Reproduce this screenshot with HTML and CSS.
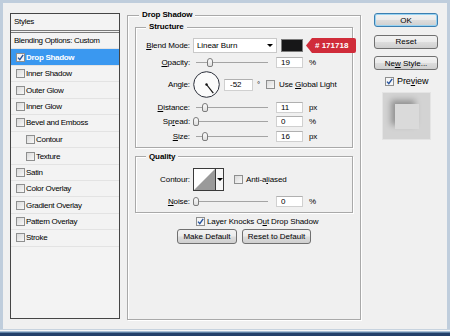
FILE: index.html
```html
<!DOCTYPE html>
<html lang="en">
<head>
    <meta charset="UTF-8">
    <title>Layer Style</title>
    <link rel="stylesheet" href="styles.css">
</head>
<body>
    <div class="window">
        <div class="dialog">
            <div class="styles-panel">
                <div class="styles-head">Styles</div>
                <div class="style-row plain">Blending Options: Custom</div>
                <div class="style-row active"><span class="cb on"><svg viewBox="0 0 7 7"><path d="M1 3.6 L2.8 5.6 L6.2 0.8"/></svg></span>Drop Shadow</div>
                <div class="style-row"><span class="cb"></span>Inner Shadow</div>
                <div class="style-row"><span class="cb"></span>Outer Glow</div>
                <div class="style-row"><span class="cb"></span>Inner Glow</div>
                <div class="style-row"><span class="cb"></span>Bevel and Emboss</div>
                <div class="style-row sub"><span class="cb"></span>Contour</div>
                <div class="style-row sub"><span class="cb"></span>Texture</div>
                <div class="style-row"><span class="cb"></span>Satin</div>
                <div class="style-row"><span class="cb"></span>Color Overlay</div>
                <div class="style-row"><span class="cb"></span>Gradient Overlay</div>
                <div class="style-row"><span class="cb"></span>Pattern Overlay</div>
                <div class="style-row"><span class="cb"></span>Stroke</div>
            </div>

            <fieldset class="group main">
                <legend>Drop Shadow</legend>

                <fieldset class="group sub structure">
                    <legend>Structure</legend>
                    <div class="rows">
                        <div class="row blend">
                            <span class="lbl"><u>B</u>lend Mode:</span>
                            <div class="select">Linear Burn<span class="arrow"></span></div>
                            <span class="swatch"></span>
                            <span class="tag"># 171718</span>
                        </div>
                        <div class="row">
                            <span class="lbl"><u>O</u>pacity:</span>
                            <span class="slider"><span class="thumb" style="left: 19%"></span></span>
                            <input class="num" type="text" value="19">
                            <span class="unit">%</span>
                        </div>
                        <div class="row">
                            <span class="lbl">Angle:</span>
                            <svg class="dial" width="27" height="27" viewBox="0 0 27 27">
                                <circle cx="13.5" cy="13.5" r="12.8" fill="#fbfbfb" stroke="#2b2f3a" stroke-width="1"/>
                                <line x1="13.5" y1="13.5" x2="20.3" y2="22.2" stroke="#111" stroke-width="1.2"/>
                                <circle cx="13.5" cy="13.5" r="1.2" fill="#111"/>
                            </svg>
                            <input class="num angle" type="text" value="-52">
                            <span class="deg">°</span>
                            <span class="cb"></span>
                            <span class="check-text">Use <u>G</u>lobal Light</span>
                        </div>
                        <div class="row">
                            <span class="lbl"><u>D</u>istance:</span>
                            <span class="slider"><span class="thumb" style="left: 12.5%"></span></span>
                            <input class="num" type="text" value="11">
                            <span class="unit">px</span>
                        </div>
                        <div class="row">
                            <span class="lbl">Sp<u>r</u>ead:</span>
                            <span class="slider"><span class="thumb" style="left: 0%"></span></span>
                            <input class="num" type="text" value="0">
                            <span class="unit">%</span>
                        </div>
                        <div class="row">
                            <span class="lbl"><u>S</u>ize:</span>
                            <span class="slider"><span class="thumb" style="left: 12.5%"></span></span>
                            <input class="num" type="text" value="16">
                            <span class="unit">px</span>
                        </div>
                    </div>
                </fieldset>

                <fieldset class="group sub quality">
                    <legend>Quality</legend>
                    <div class="rows">
                        <div class="row">
                            <span class="lbl">Contour:</span>
                            <div class="contour">
                                <svg width="21" height="21" viewBox="0 0 21 21">
                                    <polygon points="0,21 21,0 21,21" fill="#9a9a9a"/>
                                </svg>
                                <span class="drop"><span class="arrow"></span></span>
                            </div>
                            <span class="cb"></span>
                            <span class="check-text">Anti-a<u>l</u>iased</span>
                        </div>
                        <div class="row">
                            <span class="lbl"><u>N</u>oise:</span>
                            <span class="slider"><span class="thumb" style="left: 0%"></span></span>
                            <input class="num" type="text" value="0">
                            <span class="unit">%</span>
                        </div>
                    </div>
                </fieldset>

                <div class="knock">
                    <span class="cb on"><svg viewBox="0 0 7 7"><path d="M1 3.6 L2.8 5.6 L6.2 0.8"/></svg></span>
                    <span>Layer Knocks O<u>u</u>t Drop Shadow</span>
                </div>
                <div class="defaults">
                    <button class="btn make">Make Default</button>
                    <button class="btn reset-def">Reset to Default</button>
                </div>
            </fieldset>

            <div class="side">
                <button class="btn primary">OK</button>
                <button class="btn">Reset</button>
                <button class="btn">Ne<u>w</u> Style...</button>
                <div class="preview-check">
                    <span class="cb on"><svg viewBox="0 0 7 7"><path d="M1 3.6 L2.8 5.6 L6.2 0.8"/></svg></span>
                    <span>Pre<u>v</u>iew</span>
                </div>
                <div class="thumb-box"><div class="thumb-square"></div></div>
            </div>
        </div>
        <div class="frame-bottom"></div>
    </div>
</body>
</html>
```

FILE: styles.css
```css
* {
    box-sizing: border-box;
}
body {
    margin: 0;
    font: 8px "Liberation Sans", Arial, sans-serif;
    letter-spacing: -0.1px;
    color: #000;
}
u {
    text-decoration: underline;
}
.window {
    width: 450px;
    height: 336px;
    background-color: #f0f0f0;
    border: 3px solid #bfcddc;
    border-bottom: 0;
    display: flex;
    flex-direction: column;
}
.dialog {
    flex: 1;
    display: flex;
    align-items: flex-start;
}
.frame-bottom {
    height: 7px;
    margin: 0 -3px;
    background: linear-gradient(#c7d3df 0 1px, #f4f6f8 1px 2px, #a9bed4 2px 3px, #5d7fa3 3px 4px, #23406a 4px);
}

/* checkboxes */
.cb {
    display: inline-block;
    flex: none;
    width: 9px;
    height: 9px;
    border: 1px solid #8e8f8f;
    background: linear-gradient(135deg, #dadada, #f8f8f8);
}
.cb.on {
    background: #f6f6f6;
}
.cb svg {
    display: block;
    width: 7px;
    height: 7px;
}
.cb svg path {
    fill: none;
    stroke: #27549e;
    stroke-width: 1.4;
}

/* left list */
.styles-panel {
    flex: none;
    width: 110px;
    height: 306px;
    margin: 10px 0 0 7px;
    border: 1px solid #454545;
    background-color: #f3f3f3;
    letter-spacing: -0.3px;
}
.styles-head {
    height: 19px;
    padding-left: 3px;
    line-height: 16px;
    border-bottom: 3px double #7a7a7a;
}
.style-row {
    height: 16.45px;
    display: flex;
    align-items: center;
    gap: 1px;
    padding-left: 5px;
    border-bottom: 1px solid #e3e3e3;
}
.style-row.plain {
    padding-left: 3px;
}
.style-row.sub {
    padding-left: 15px;
}
.style-row.active {
    background-color: #3a98f0;
    color: #fff;
    font-weight: bold;
}

/* group boxes */
.group {
    margin: 0;
    min-width: 0;
    border: 1px solid #a9a9a9;
    box-shadow: inset 1px 1px 0 #fff, 1px 1px 0 #fff;
}
.group legend {
    padding: 0 3px;
    line-height: 10px;
    font-weight: bold;
    background-color: #f0f0f0;
}
.main {
    flex: none;
    width: 234px;
    height: 310px;
    margin: 7px 0 0 7px;
    padding: 0 7px;
}
.main > legend {
    margin-left: 4px;
}
.sub {
    width: 100%;
    padding: 6px 0 5px;
}
.sub legend {
    margin-left: 10px;
}
.structure {
    margin-top: 2px;
}
.structure .rows {
    display: grid;
    grid-template-rows: 15px 11px 27px 11px 11px 11px;
    row-gap: 3.6px;
}
.quality {
    margin-top: 4px;
}
.quality .rows {
    display: grid;
    grid-template-rows: 23px 11px;
    row-gap: 5px;
}
.row {
    display: flex;
    align-items: center;
}
.blend {
    position: relative;
}
.lbl {
    flex: none;
    width: 54px;
    text-align: right;
}

/* controls */
.select {
    width: 84px;
    height: 15px;
    margin-left: 3px;
    padding-left: 3px;
    display: flex;
    align-items: center;
    background-color: #fff;
    border: 1px solid #c9c9c9;
}
.arrow {
    width: 0;
    height: 0;
    border-left: 3px solid transparent;
    border-right: 3px solid transparent;
    border-top: 3px solid #000;
}
.select .arrow {
    margin-left: auto;
    margin-right: 3px;
}
.swatch {
    width: 22px;
    height: 13px;
    margin-left: 4px;
    border: 1px solid #7c7c7c;
    background-color: #171718;
}
.tag {
    position: absolute;
    left: 170px;
    top: 0;
    width: 50px;
    height: 15px;
    padding-left: 9px;
    line-height: 15px;
    color: #fff;
    font-weight: bold;
    letter-spacing: 0;
    background-color: #d02c3a;
    border-radius: 0 2px 2px 0;
    clip-path: polygon(6px 0, 100% 0, 100% 100%, 6px 100%, 0 50%);
}
.slider {
    position: relative;
    flex: none;
    width: 72px;
    height: 9px;
    margin: 0 8px 0 6px;
    background: linear-gradient(#a4a4a4, #a4a4a4) center / 100% 1px no-repeat;
}
.thumb {
    position: absolute;
    top: 0;
    width: 6px;
    height: 9px;
    margin-left: -3px;
    border: 1px solid #7c7c7c;
    border-radius: 3px 3px 2px 2px;
    background: linear-gradient(#fdfdfd, #dedede);
}
.num {
    flex: none;
    width: 27px;
    height: 11px;
    margin: 0;
    padding: 0 0 0 4px;
    font: inherit;
    color: #000;
    border: 1px solid #d0d0d0;
    border-top-color: #b0b0b0;
    background-color: #fff;
    outline: none;
}
.unit {
    margin-left: 6px;
}
.dial {
    flex: none;
    margin-left: 3px;
}
.num.angle {
    width: 29px;
    height: 12px;
    margin-left: 4px;
    padding-left: 5px;
}
.deg {
    width: 13px;
    padding-left: 4px;
}
.check-text {
    margin-left: 4px;
}
.contour {
    flex: none;
    width: 31px;
    height: 23px;
    margin-left: 3px;
    display: flex;
    border: 1px solid #3a3a3a;
    background-color: #fff;
}
.contour svg {
    display: block;
}
.contour .drop {
    flex: 1;
    display: flex;
    align-items: center;
    justify-content: center;
    border-left: 1px solid #3a3a3a;
    background-color: #f7f7f7;
}
.quality .cb {
    margin-left: 10px;
}
.quality .check-text {
    margin-left: 3px;
}
.knock {
    height: 9px;
    margin-top: 4px;
    padding-left: 61px;
    display: flex;
    align-items: center;
    gap: 2px;
}
.defaults {
    display: flex;
    justify-content: center;
    gap: 5px;
    margin-top: 3px;
}

/* buttons */
.btn {
    height: 15px;
    margin: 0;
    padding: 0;
    font: inherit;
    color: #000;
    border: 1px solid #707070;
    border-radius: 3px;
    background: linear-gradient(#f2f2f2, #ebebeb 48%, #dddddd 52%, #cfcfcf);
}
.make {
    width: 60px;
}
.reset-def {
    width: 69px;
}
.side {
    flex: none;
    width: 64px;
    margin: 10px 0 0 13px;
    display: flex;
    flex-direction: column;
    gap: 7.5px;
}
.side .btn {
    height: 14px;
}
.btn.primary {
    border-color: #3c7fb1;
    box-shadow: inset 0 0 0 1px #98d3f2;
}
.preview-check {
    height: 10px;
    margin-top: -1.5px;
    padding-left: 11px;
    display: flex;
    align-items: center;
    gap: 3px;
    font-size: 9px;
}
.thumb-box {
    width: 49px;
    height: 48px;
    margin: -1.5px 0 0 8px;
    padding: 11px 0 0 12px;
    overflow: hidden;
    border: 1px solid #e4e4e4;
    background-color: #d3d3d3;
}
.thumb-square {
    width: 24px;
    height: 25px;
    background-color: #dadada;
    box-shadow: -4px -4px 6px rgba(0, 0, 0, 0.3);
}
```
